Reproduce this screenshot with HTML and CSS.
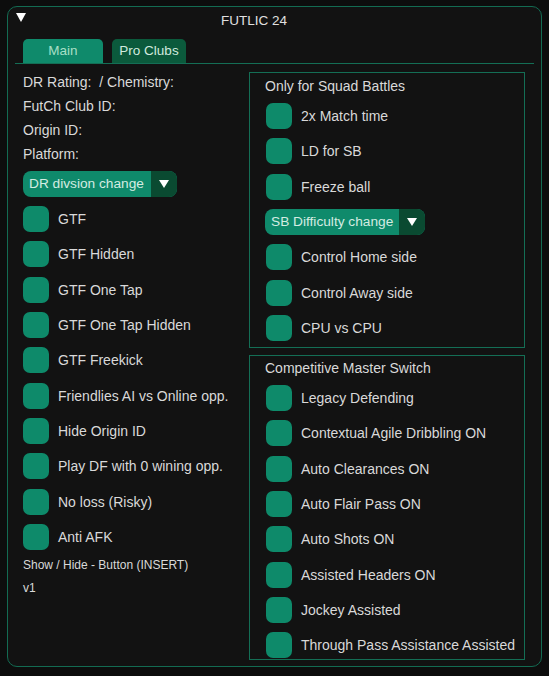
FILE: index.html
```html
<!DOCTYPE html>
<html lang="en">
<head>
<meta charset="utf-8">
<title>FUTLIC 24</title>
<link rel="stylesheet" href="styles.css">
</head>
<body>
<div class="window">
  <div class="titlebar">
    <svg class="collapse" width="10" height="9" viewBox="0 0 10 9"><polygon points="0,0 10,0 5,9" fill="#ffffff"/></svg>
    <span class="title">FUTLIC 24</span>
  </div>
  <div class="tabbar">
    <div class="tab tab-active">Main</div>
    <div class="tab tab-idle">Pro Clubs</div>
  </div>
  <div class="content">
    <div class="left">
      <div class="info">DR Rating:&nbsp; / Chemistry:</div>
      <div class="info">FutCh Club ID:</div>
      <div class="info">Origin ID:</div>
      <div class="info">Platform:</div>
      <div class="combo combo-dr">
        <span class="combo-label">DR divsion change</span>
        <span class="combo-arrow"><svg width="10" height="8" viewBox="0 0 10 8"><polygon points="0,0 10,0 5,8" fill="#ffffff"/></svg></span>
      </div>
      <div class="checks checks-left">
        <div class="row"><span class="box"></span><span class="label">GTF</span></div>
        <div class="row"><span class="box"></span><span class="label">GTF Hidden</span></div>
        <div class="row"><span class="box"></span><span class="label">GTF One Tap</span></div>
        <div class="row"><span class="box"></span><span class="label">GTF One Tap Hidden</span></div>
        <div class="row"><span class="box"></span><span class="label">GTF Freekick</span></div>
        <div class="row"><span class="box"></span><span class="label">Friendlies AI vs Online opp.</span></div>
        <div class="row"><span class="box"></span><span class="label">Hide Origin ID</span></div>
        <div class="row"><span class="box"></span><span class="label">Play DF with 0 wining opp.</span></div>
        <div class="row"><span class="box"></span><span class="label">No loss (Risky)</span></div>
        <div class="row"><span class="box"></span><span class="label">Anti AFK</span></div>
      </div>
      <div class="note">Show / Hide - Button (INSERT)</div>
      <div class="note note-v">v1</div>
    </div>
    <div class="right">
      <div class="panel panel-sb">
        <div class="panel-title">Only for Squad Battles</div>
        <div class="checks">
          <div class="row"><span class="box"></span><span class="label">2x Match time</span></div>
          <div class="row"><span class="box"></span><span class="label">LD for SB</span></div>
          <div class="row"><span class="box"></span><span class="label">Freeze ball</span></div>
          <div class="combo combo-sb">
            <span class="combo-label">SB Difficulty change</span>
            <span class="combo-arrow"><svg width="10" height="8" viewBox="0 0 10 8"><polygon points="0,0 10,0 5,8" fill="#ffffff"/></svg></span>
          </div>
          <div class="row"><span class="box"></span><span class="label">Control Home side</span></div>
          <div class="row"><span class="box"></span><span class="label">Control Away side</span></div>
          <div class="row"><span class="box"></span><span class="label">CPU vs CPU</span></div>
        </div>
      </div>
      <div class="panel panel-cm">
        <div class="panel-title">Competitive Master Switch</div>
        <div class="checks">
          <div class="row"><span class="box"></span><span class="label">Legacy Defending</span></div>
          <div class="row"><span class="box"></span><span class="label">Contextual Agile Dribbling ON</span></div>
          <div class="row"><span class="box"></span><span class="label">Auto Clearances ON</span></div>
          <div class="row"><span class="box"></span><span class="label">Auto Flair Pass ON</span></div>
          <div class="row"><span class="box"></span><span class="label">Auto Shots ON</span></div>
          <div class="row"><span class="box"></span><span class="label">Assisted Headers ON</span></div>
          <div class="row"><span class="box"></span><span class="label">Jockey Assisted</span></div>
          <div class="row"><span class="box"></span><span class="label">Through Pass Assistance Assisted</span></div>
        </div>
      </div>
    </div>
  </div>
</div>
</body>
</html>
```

FILE: styles.css
```css
html, body {
  margin: 0;
  padding: 0;
  background: #0d0d0d;
}

body {
  font-family: "Liberation Sans", Arial, sans-serif;
  font-size: 14px;
  color: #d9d9d9;
}

.window {
  margin: 6px 0 0 7px;
  width: 535px;
  height: 661px;
  box-sizing: border-box;
  border: 1px solid #136b52;
  border-radius: 10px;
  background: #121212;
}

.titlebar {
  display: flex;
  align-items: center;
  height: 26px;
  padding-left: 8px;
}

.collapse {
  align-self: flex-start;
  margin-top: 6px;
  flex: none;
}

.title {
  margin-left: 195px;
  color: #e0e0e0;
  font-size: 13.5px;
}

.tabbar {
  display: flex;
  gap: 9px;
  margin: 6px 7px 0 7px;
  padding-left: 8px;
  border-bottom: 1px solid #146e55;
}

.tab {
  height: 24px;
  line-height: 24px;
  text-align: center;
  border-radius: 5px 5px 0 0;
  font-size: 13.5px;
}

.tab-active {
  width: 80px;
  background: #0f8a6b;
  color: #a8dfc6;
}

.tab-idle {
  width: 74px;
  background: #0b5a3c;
  color: #d2eadf;
}

.content {
  display: flex;
  gap: 8px;
  margin: 0 7px;
  padding: 8px 8px 0 8px;
}

.left {
  width: 218px;
  display: flex;
  flex-direction: column;
  flex: none;
}

.info {
  line-height: 20px;
  margin-bottom: 4px;
}

.combo {
  display: flex;
  height: 26px;
  border-radius: 8px;
  overflow: hidden;
  background: #0f8a6b;
  color: #d4ece2;
  font-size: 13.7px;
}

.combo-dr {
  width: 154px;
  margin-top: 3px;
}

.combo-sb {
  width: 160px;
  margin-left: -1px;
}

.combo-label {
  flex: 1;
  line-height: 26px;
  padding-left: 6px;
  white-space: nowrap;
}

.combo-arrow {
  width: 26px;
  flex: none;
  background: #0a4a31;
  display: flex;
  align-items: center;
  justify-content: center;
}

.checks {
  display: flex;
  flex-direction: column;
  gap: 9.33px;
}

.checks-left {
  margin-top: 9px;
}

.row {
  display: flex;
  align-items: center;
  height: 26px;
}

.box {
  width: 26px;
  height: 26px;
  border-radius: 7px;
  background: #0e8a6a;
  flex: none;
}

.label {
  margin-left: 9px;
  white-space: nowrap;
}

.note {
  font-size: 12px;
  line-height: 20px;
  margin-top: 5px;
}

.note-v {
  margin-top: 3px;
}

.right {
  width: 276px;
  display: flex;
  flex-direction: column;
  flex: none;
}

.panel {
  border: 1px solid #146e55;
  padding-left: 16px;
}

.panel-sb {
  padding-top: 3px;
  padding-bottom: 6px;
}

.panel-cm {
  margin-top: 7px;
  padding-top: 2px;
  padding-bottom: 0;
  height: 305px;
  box-sizing: border-box;
}

.panel-title {
  line-height: 20px;
  margin-bottom: 7px;
  margin-left: -1px;
}
```
